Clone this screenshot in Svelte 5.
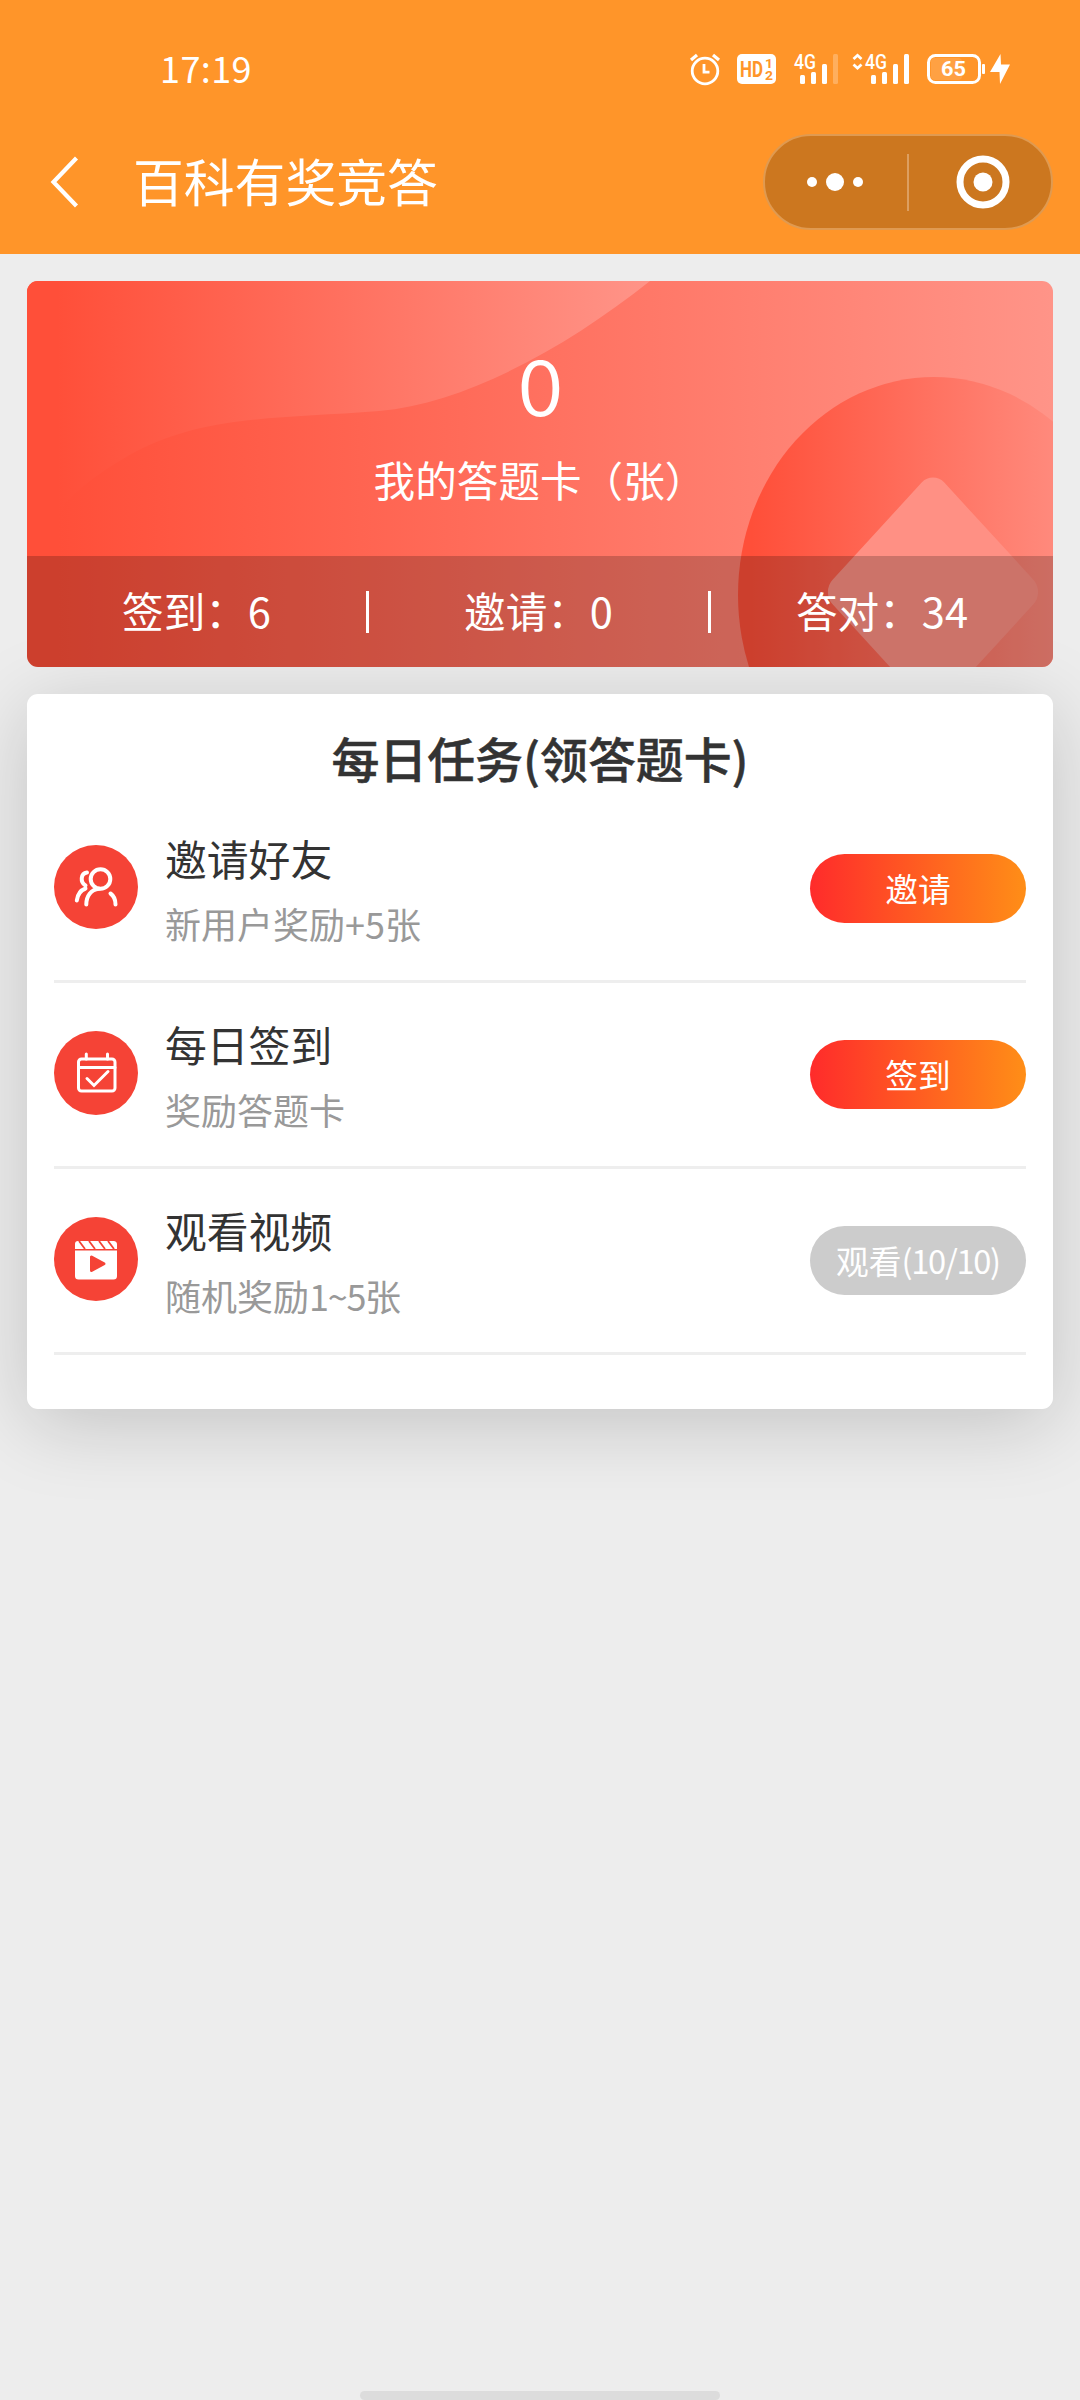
<script>
  const stats = [
    { label: '签到', value: 6 },
    { label: '邀请', value: 0 },
    { label: '答对', value: 34 }
  ];

  let cards = 0;

  const tasks = [
    { icon: 'invite', title: '邀请好友', desc: '新用户奖励', bonus: '+5张', action: '邀请' },
    { icon: 'sign', title: '每日签到', desc: '奖励答题卡', action: '签到' },
    { icon: 'video', title: '观看视频', desc: '随机奖励', bonus: '1~5张', action: '观看', progress: '(10/10)', done: true }
  ];
</script>

<div class="page">
  <header>
    <div class="status">
      <span class="time">17:19</span>
      <svg class="status-icons" width="330" height="40" viewBox="0 0 330 40" fill="none">
        <!-- alarm -->
        <g stroke="#fff" stroke-width="2.8">
          <circle cx="16" cy="21" r="12.8" />
          <path d="M15 14v8.200h5.500" />
          <path d="M2 10l6-5M30 10l-6-5" stroke-width="3.200" />
        </g>
        <!-- HD -->
        <rect x="48" y="4" width="39" height="30" rx="5" fill="#fff" />
        <g fill="#ff9529" font-weight="700">
          <text x="51" y="27" font-size="22" textLength="23" lengthAdjust="spacingAndGlyphs">HD</text>
          <text x="76" y="17.500" font-size="13" textLength="8" lengthAdjust="spacingAndGlyphs">1</text>
          <text x="76" y="30" font-size="13" textLength="8" lengthAdjust="spacingAndGlyphs">2</text>
        </g>
        <!-- signal 1 -->
        <text x="105" y="19" font-size="20" font-weight="500" fill="#fff" textLength="22" lengthAdjust="spacingAndGlyphs">4G</text>
        <g fill="#fff">
          <rect x="111" y="25" width="5" height="9" rx="1.500" />
          <rect x="122" y="22" width="5" height="12" rx="1.500" />
          <rect x="133" y="14" width="5" height="20" rx="1.500" />
          <rect x="144" y="4" width="5" height="30" rx="1.500" opacity=".25" />
        </g>
        <!-- signal 2 -->
        <path d="M164.500 9l4-3.700 4 3.700M164.500 14.500l4 3.700 4-3.700" stroke="#fff" stroke-width="2.800" />
        <text x="176" y="19" font-size="20" font-weight="500" fill="#fff" textLength="22" lengthAdjust="spacingAndGlyphs">4G</text>
        <g fill="#fff">
          <rect x="182" y="25" width="5" height="9" rx="1.500" />
          <rect x="193" y="22" width="5" height="12" rx="1.500" />
          <rect x="204" y="14" width="5" height="20" rx="1.500" />
          <rect x="215" y="4" width="5" height="30" rx="1.500" />
        </g>
        <!-- battery -->
        <rect x="239.500" y="5.500" width="51" height="27" rx="7" stroke="#fff" stroke-width="3" />
        <rect x="242" y="8" width="31" height="22" rx="4" fill="#fff" opacity=".12" />
        <rect x="293" y="14" width="3" height="10" rx="1" fill="#fff" />
        <text x="252" y="26" font-size="20.500" font-weight="700" fill="#fff" textLength="25" lengthAdjust="spacingAndGlyphs">65</text>
        <path d="M311.500 4L301 22h9.500l.5 12L321 14.500h-9z" fill="#fff" />
      </svg>
    </div>
    <nav>
      <svg class="back" width="30" height="54" viewBox="0 0 30 54" fill="none" stroke="#fff" stroke-width="4.200">
        <path d="M27.500 3L4.500 27l23 24" />
      </svg>
      <h1>百科有奖竞答</h1>
      <div class="capsule">
        <svg class="dots" width="56" height="20" viewBox="0 0 56 20" fill="#fff">
          <circle cx="5" cy="10" r="5" />
          <circle cx="28" cy="10" r="9" />
          <circle cx="51" cy="10" r="5" />
        </svg>
        <i></i>
        <svg class="target" width="54" height="54" viewBox="0 0 54 54" fill="none">
          <circle cx="27" cy="27" r="23" stroke="#fff" stroke-width="7" />
          <circle cx="27" cy="27" r="9.500" fill="#fff" />
        </svg>
      </div>
    </nav>
  </header>

  <section class="banner">
    <svg class="art" width="1026" height="386" viewBox="0 0 1026 386">
      <defs>
        <linearGradient id="base" x1="0" y1="0" x2="1" y2="0">
          <stop offset="0.03" stop-color="#ff4f39" />
          <stop offset="1" stop-color="#ff9488" />
        </linearGradient>
        <linearGradient id="wave" gradientUnits="userSpaceOnUse" x1="30" y1="0" x2="620" y2="0">
          <stop offset="0" stop-color="#ff4f39" />
          <stop offset="1" stop-color="#ff9488" />
        </linearGradient>
        <linearGradient id="coin" gradientUnits="userSpaceOnUse" x1="725" y1="0" x2="1080" y2="0">
          <stop offset="0" stop-color="#ff4f39" />
          <stop offset="1" stop-color="#ff9488" />
        </linearGradient>
      </defs>
      <rect width="1026" height="386" fill="url(#base)" />
      <path d="M0 0H623C540 66 440 122 352 130C250 138 180 134 110 170C62 196 36 220 24 244L0 262z" fill="url(#wave)" />
      <ellipse cx="907" cy="314" rx="196" ry="218" fill="url(#coin)" />
      <rect x="-79" y="-79" width="158" height="158" rx="16" transform="translate(906 311) scale(1 1.09) rotate(45)" fill="#ff9084" />
    </svg>
    <div class="count">
      <strong>{cards}</strong>
      <span>我的答题卡（张）</span>
    </div>
    <div class="stats">
      {#each stats as s}
        <div class="stat">{s.label}：<b>{s.value}</b></div>
      {/each}
    </div>
  </section>

  <section class="tasks">
    <h2>每日任务(领答题卡)</h2>
    {#each tasks as task}
      <div class="task">
        <svg class="icon" width="84" height="84" viewBox="0 0 84 84" fill="none">
          <circle cx="42" cy="42" r="42" fill="#f54336" />
          {#if task.icon === 'invite'}
            <g stroke="#fff" stroke-width="4" stroke-linecap="round">
              <circle cx="46.500" cy="34" r="9.800" />
              <path d="M32.300 59.500C32.300 51 37 44.500 45 43.800" />
              <path d="M56.500 48.500C60 51 61.500 55 61.500 59.500" />
              <path d="M33 27.500C26.500 28.500 26 37 31.500 40.500M31.500 43.500C26 45.500 23.500 50 22.800 55.500" />
            </g>
          {:else if task.icon === 'sign'}
            <g stroke="#fff" stroke-width="3" stroke-linecap="round">
              <rect x="24.500" y="28" width="36.500" height="32" rx="3" />
              <path d="M25 36.500h36M32.300 23v5M53.500 23v5" />
              <path d="M33 47.500l7 7L54 40.500" />
            </g>
          {:else}
            <path d="M24 24h35.500q3.500 0 3.500 3.500V32H21v-5q0-3 3-3z" fill="#fff" />
            <path d="M21 33.500h42V59q0 3.500-3.500 3.500h-35Q21 62.500 21 59z" fill="#fff" />
            <path d="M25 24l6 8M35 24l6 8M45 24l6 8M54 24l6 8" stroke="#f54336" stroke-width="1.800" />
            <path d="M37.500 40v13.500L50 46.800z" fill="#f54336" stroke="#f54336" stroke-width="3" stroke-linejoin="round" />
          {/if}
        </svg>
        <div class="info">
          <h3>{task.title}</h3>
          <p>{task.desc}{#if task.bonus}<span class:tight={task.done}>{task.bonus}</span>{/if}</p>
        </div>
        <button class:done={task.done}>{task.action}{#if task.progress}<span>{task.progress}</span>{/if}</button>
      </div>
    {/each}
  </section>

  <div class="home-bar"></div>
</div>

<style>
  :global(body) {
    background: #ededed;
  }

  .page {
    display: flex;
    flex-direction: column;
    height: 2400px;
    background: #ededed;
    font-family: "Noto Sans CJK SC", sans-serif;
    overflow: hidden;
  }

  h1, h2, h3, p {
    margin: 0;
    font-weight: 400;
  }

  header {
    height: 254px;
    background: #ff9529;
    color: #fff;
  }

  .status {
    display: flex;
    align-items: center;
    justify-content: space-between;
    height: 110px;
    padding: 28px 61px 0 160px;
    box-sizing: border-box;
  }

  .status-icons {
    margin-top: 1px;
    font-family: Roboto, "Liberation Sans", sans-serif;
  }

  .time {
    margin-bottom: 5px;
    font-size: 36px;
    letter-spacing: 0.4px;
  }

  nav {
    display: flex;
    align-items: center;
    height: 144px;
    padding: 0 27px 0 49px;
  }

  h1 {
    flex: 1;
    margin: 0 0 4px 54px;
    font-size: 50.8px;
  }

  .capsule {
    display: flex;
    align-items: center;
    width: 290px;
    height: 96px;
    box-sizing: border-box;
    border: 2px solid #e09a50;
    border-radius: 48px;
    background: #cc771f;
  }

  .dots {
    margin-left: 42px;
  }

  .capsule i {
    width: 2px;
    height: 57px;
    margin: 0 47px 0 44px;
    background: #dd9f60;
  }

  .banner {
    position: relative;
    display: flex;
    flex-direction: column;
    height: 386px;
    margin: 27px 27px 0;
    border-radius: 11px;
    overflow: hidden;
    color: #fff;
  }

  .art {
    position: absolute;
    top: 0;
    left: 0;
  }

  .count {
    position: relative;
    flex: 1;
    display: flex;
    flex-direction: column;
    align-items: center;
  }

  .count strong {
    margin-top: 46px;
    font-size: 78px;
    font-weight: 350;
    line-height: 110px;
    transform: scaleX(1.07);
  }

  .count span {
    margin-top: 12px;
    font-size: 41.6px;
    line-height: 60px;
  }

  .stats {
    position: relative;
    display: grid;
    grid-template-columns: repeat(3, 1fr);
    align-items: center;
    height: 111px;
    background: rgba(0, 0, 0, 0.2);
  }

  .stat {
    height: 42px;
    font-size: 41.6px;
    line-height: 38px;
    text-align: center;
  }

  .stat:not(:last-child) {
    border-right: 3px solid #fff;
  }

  .stat b {
    font-weight: 400;
    margin-left: 1px;
  }

  .tasks {
    height: 715px;
    margin: 27px 27px 0;
    padding: 27px 27px 0;
    box-sizing: border-box;
    border-radius: 11px;
    background: #fff;
    box-shadow: 0 14px 80px rgba(0, 0, 0, 0.18);
  }

  h2 {
    height: 76px;
    color: #333;
    font-size: 47.9px;
    font-weight: 500;
    line-height: 73px;
    text-align: center;
    -webkit-text-stroke: 0.5px #333;
  }

  .task {
    display: flex;
    align-items: center;
    height: 186px;
    box-sizing: border-box;
    border-bottom: 3px solid #eee;
  }

  .icon {
    margin-bottom: 3px;
  }

  .info {
    flex: 1;
    margin-left: 27px;
  }

  h3 {
    color: #333;
    font-size: 41.8px;
    line-height: 68px;
  }

  p {
    color: #999;
    font-size: 36px;
    line-height: 62px;
  }

  .tight {
    letter-spacing: -1.3px;
  }

  button {
    width: 216px;
    height: 69px;
    padding: 0 0 2px;
    border: 0;
    border-radius: 35px;
    background: linear-gradient(90deg, #ff2b2b, #ff8e17);
    color: #fff;
    font-family: inherit;
    font-size: 32.7px;
  }

  button span {
    letter-spacing: -1.3px;
  }

  button.done {
    background: #ccc;
  }

  .home-bar {
    width: 360px;
    height: 9px;
    margin: auto auto 0;
    border-radius: 5px;
    background: #dcdcdc;
  }
</style>
